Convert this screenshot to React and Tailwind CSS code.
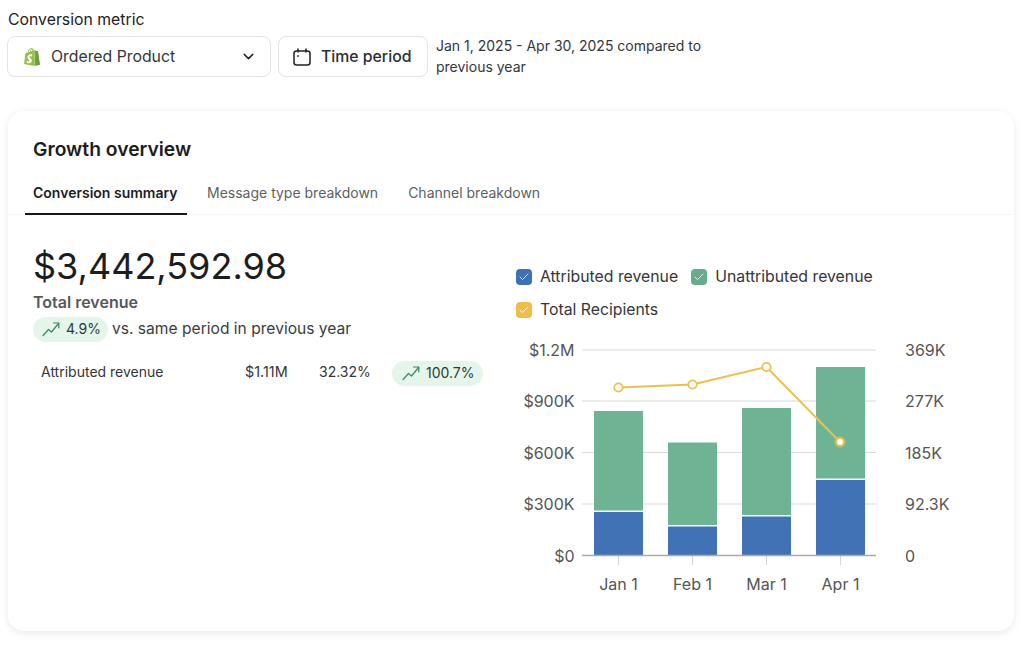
import { SiShopify } from "react-icons/si";
import { ChevronDown, Check } from "lucide-react";

const LEFT_TICKS = [
	["$1.2M", 350],
	["$900K", 401],
	["$600K", 452.5],
	["$300K", 504],
	["$0", 555.5],
];
const RIGHT_TICKS = [
	["369K", 350],
	["277K", 401],
	["185K", 452.5],
	["92.3K", 504],
	["0", 555.5],
];
const BARS = [
	{ label: "Jan 1", x: 594, top: 411, mid: 512 },
	{ label: "Feb 1", x: 668, top: 442.5, mid: 526.5 },
	{ label: "Mar 1", x: 742, top: 408, mid: 516.5 },
	{ label: "Apr 1", x: 816, top: 367, mid: 480 },
];
const LINE = [
	[618.5, 387.5],
	[692.5, 384.5],
	[766.5, 367],
	[840, 442],
];

function Trend() {
	return (
		<svg width="18" height="16" viewBox="0 0 18 16" fill="none" stroke="#3b8560" strokeWidth="1.2" strokeLinecap="round" strokeLinejoin="round">
			<path d="M1 14.5 L6.5 8.5 L9.5 11 L16.5 2.5" />
			<path d="M11.5 2 L16.8 2 L16.8 7" />
		</svg>
	);
}

function Badge({ children, className }) {
	return (
		<span className={`inline-flex items-center gap-[6px] rounded-full bg-[#e4f6ea] text-[#2f3a35] text-sm ${className}`}>
			<Trend />
			{children}
		</span>
	);
}

function LegendItem({ color, children }) {
	return (
		<div className="flex items-center gap-2">
			<span className={`flex items-center justify-center w-4 h-4 rounded ${color}`}>
				<Check size={12} strokeWidth={1.6} className="text-white" />
			</span>
			<span>{children}</span>
		</div>
	);
}

function Chart() {
	return (
		<svg width="450" height="260" viewBox="510 340 450 260" className="block" fontFamily="Inter, sans-serif" fontSize="16" fill="#555">
			{LEFT_TICKS.slice(0, 4).map(([, y]) => (
				<line key={y} x1="582" x2="876" y1={y} y2={y} stroke="#d9dadb" strokeWidth="1.2" />
			))}
			{LEFT_TICKS.map(([t, y]) => (
				<text key={t} x="574.5" y={y + 6} textAnchor="end">{t}</text>
			))}
			{RIGHT_TICKS.map(([t, y]) => (
				<text key={t} x="905" y={y + 6}>{t}</text>
			))}
			{BARS.map((b) => (
				<g key={b.label}>
					<rect x={b.x} y={b.top} width="49" height={b.mid - b.top - 1.5} fill="#6eb393" />
					<rect x={b.x} y={b.mid} width="49" height={555.5 - b.mid} fill="#4272b6" />
					<line x1={b.x + 24.5} x2={b.x + 24.5} y1="556" y2="565" stroke="#d4d4d4" strokeWidth="1" />
					<text x={b.x + 24.5} y="590" textAnchor="middle">{b.label}</text>
				</g>
			))}
			<line x1="582" x2="876" y1="555.5" y2="555.5" stroke="#a9aaac" strokeWidth="1.5" />
			<polyline points={LINE.map((p) => p.join(",")).join(" ")} fill="none" stroke="#ecc04f" strokeWidth="2" />
			{LINE.map(([x, y], i) => (
				<g key={x}>
					{i === 3 && <circle cx={x} cy={y} r="6" fill="#ecc04f" opacity="0.35" />}
					<circle cx={x} cy={y} r={i === 3 ? 3.8 : 4.2} fill="#fff" stroke="#ecc04f" strokeWidth="1.8" />
				</g>
			))}
		</svg>
	);
}

export default function App() {
	return (
		<div className="w-[1024px] h-[645px] overflow-hidden bg-white text-[#1f2124] font-['Inter',sans-serif]">
			<div className="px-2 pt-[11px]">
				<div className="text-[15.8px] leading-[18px]">Conversion metric</div>
				<div className="flex items-start mt-[7px] -ml-px">
					<button className="flex items-center w-[264px] h-[41px] pl-[15px] pr-[13px] rounded-lg border border-[#e3e3e3] bg-white text-[15.8px] text-[#33363a]">
						<span className="relative w-[18px] h-[18px]">
							<SiShopify size={18} className="text-[#95bf47]" />
							<SiShopify size={18} className="absolute inset-0 text-[#6f9b42] [clip-path:inset(0_0_0_68%)]" />
						</span>
						<span className="ml-[10px]">Ordered Product</span>
						<ChevronDown size={17} strokeWidth={2} className="ml-auto text-[#222]" />
					</button>
					<button className="flex items-center w-[150px] h-[41px] ml-[7px] pl-[14px] rounded-lg border border-[#e3e3e3] bg-white text-[15.8px] font-medium text-[#2b2d30]">
						<svg width="18" height="18" viewBox="0 0 18 18" fill="none" stroke="#222" strokeWidth="1.5" strokeLinecap="round">
							<rect x="1" y="3" width="16" height="14" rx="2.5" />
							<path d="M5 1v3M13 1v3" />
							<rect x="4.2" y="7.2" width="1.6" height="1.6" fill="#222" stroke="none" />
						</svg>
						<span className="ml-[10px]">Time period</span>
					</button>
					<p className="ml-2 -mt-px w-[280px] text-sm leading-[21px] text-[#33363a]">
						Jan 1, 2025 - Apr 30, 2025 compared to previous year
					</p>
				</div>
			</div>

			<div className="mt-[34px] ml-2 w-[1006px] h-[520px] rounded-2xl bg-white shadow-[0_2px_8px_rgba(0,0,0,0.09)]">
				<h2 className="pl-[25px] pt-[24px] text-[19.3px] leading-[28px] font-semibold text-[#1c1d1f]">Growth overview</h2>
				<div className="flex mt-[16px] px-[17px] border-b border-[#f7f7f7] text-sm text-[#5c5f62] h-[36px]">
					<div className="w-[162px] pl-2 pt-[4px] h-[36px] border-b-2 border-[#16171a] font-semibold text-[#1c1d1f]">
						Conversion summary
					</div>
					<div className="ml-[20px] pt-[4px]">Message type breakdown</div>
					<div className="ml-[30px] pt-[4px]">Channel breakdown</div>
				</div>

				<div className="flex">
					<div className="w-[502px] pl-[25px]">
						<div className="mt-[28px] text-[36px] leading-[47px] text-[#1c1d1f]">$3,442,592.98</div>
						<div className="text-base leading-[24px] font-semibold text-[#55585c]">Total revenue</div>
						<div className="flex items-center mt-[2px] h-[26px]">
							<Badge className="h-[25px] w-[75px] pl-[9px]">4.9%</Badge>
							<span className="ml-1 text-[15.6px] text-[#3a3d40]">vs. same period in previous year</span>
						</div>
						<div className="flex items-center mt-[17px] h-[26px] text-sm text-[#33363a]">
							<span className="ml-2 w-[204px]">Attributed revenue</span>
							<span className="w-[74px] text-[14.4px]">$1.11M</span>
							<span className="w-[73px]">32.32%</span>
							<Badge className="h-[25px] w-[91px] pl-[10px] mt-[2px]">100.7%</Badge>
						</div>
					</div>
					<div className="pl-[6px]">
						<div className="mt-[50px] flex flex-wrap w-[400px] gap-x-[13px] gap-y-[9px] text-[15.8px] leading-6 text-[#33363a]">
							<LegendItem color="bg-[#3f6fb5]">Attributed revenue</LegendItem>
							<LegendItem color="bg-[#66ac8d]">Unattributed revenue</LegendItem>
							<LegendItem color="bg-[#eebd4a]">Total Recipients</LegendItem>
						</div>
						<div className="-ml-[6px] mt-[18px]">
							<Chart />
						</div>
					</div>
				</div>
			</div>
		</div>
	);
}
